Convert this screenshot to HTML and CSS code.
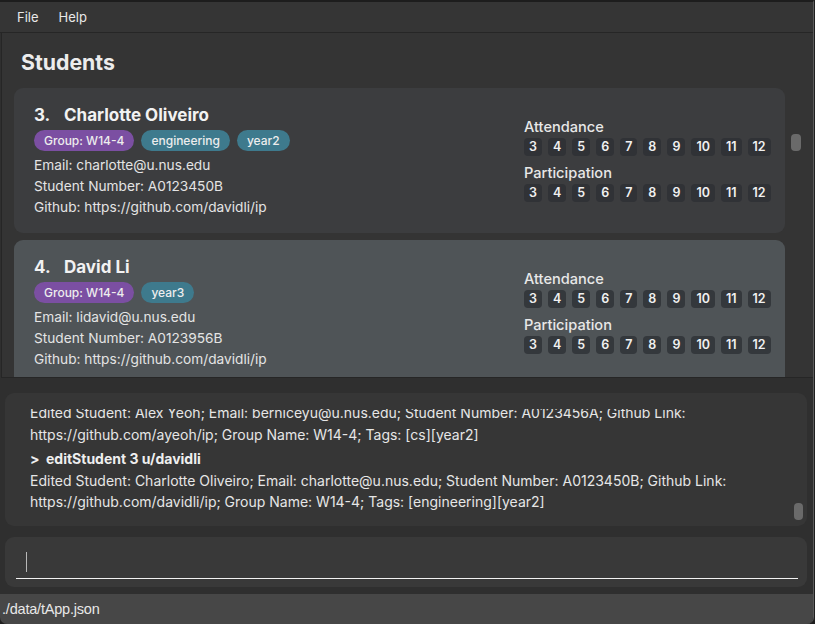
FILE: index.html
```html
<!DOCTYPE html>
<html>
<head>
<meta charset="utf-8">
<link rel="stylesheet" href="styles.css">
</head>
<body>
<div class="window">
  <div class="menubar"><span class="menu-item">File</span><span class="menu-item">Help</span></div>
  <div class="list-panel">
    <h1 class="title">Students</h1>
    <div class="list-wrap">
      <div class="list">
        <div class="card">
          <div class="info">
            <div class="name"><span class="idx">3.</span>Charlotte Oliveiro</div>
            <div class="tags"><span class="tag group">Group: W14-4</span><span class="tag">engineering</span><span class="tag">year2</span></div>
            <div class="field">Email: charlotte@u.nus.edu</div>
            <div class="field">Student Number: A0123450B</div>
            <div class="field">Github: https://github.com/davidli/ip</div>
          </div>
          <div class="marks">
            <div class="marks-label">Attendance</div>
            <div class="weeks"><span class="wk">3</span><span class="wk">4</span><span class="wk">5</span><span class="wk">6</span><span class="wk">7</span><span class="wk">8</span><span class="wk">9</span><span class="wk">10</span><span class="wk">11</span><span class="wk">12</span></div>
            <div class="marks-label second">Participation</div>
            <div class="weeks"><span class="wk">3</span><span class="wk">4</span><span class="wk">5</span><span class="wk">6</span><span class="wk">7</span><span class="wk">8</span><span class="wk">9</span><span class="wk">10</span><span class="wk">11</span><span class="wk">12</span></div>
          </div>
        </div>
        <div class="card selected">
          <div class="info">
            <div class="name"><span class="idx">4.</span>David Li</div>
            <div class="tags"><span class="tag group">Group: W14-4</span><span class="tag">year3</span></div>
            <div class="field">Email: lidavid@u.nus.edu</div>
            <div class="field">Student Number: A0123956B</div>
            <div class="field">Github: https://github.com/davidli/ip</div>
          </div>
          <div class="marks">
            <div class="marks-label">Attendance</div>
            <div class="weeks"><span class="wk">3</span><span class="wk">4</span><span class="wk">5</span><span class="wk">6</span><span class="wk">7</span><span class="wk">8</span><span class="wk">9</span><span class="wk">10</span><span class="wk">11</span><span class="wk">12</span></div>
            <div class="marks-label second">Participation</div>
            <div class="weeks"><span class="wk">3</span><span class="wk">4</span><span class="wk">5</span><span class="wk">6</span><span class="wk">7</span><span class="wk">8</span><span class="wk">9</span><span class="wk">10</span><span class="wk">11</span><span class="wk">12</span></div>
          </div>
        </div>
      </div>
      <div class="track"><div class="thumb list-thumb"></div></div>
    </div>
  </div>
  <div class="lower">
    <div class="result">
      <div class="result-view">
        <div class="result-text">
          <div class="out">Edited Student: Alex Yeoh; Email: berniceyu@u.nus.edu; Student Number: A0123456A; Github Link: https://github.com/ayeoh/ip; Group Name: W14-4; Tags: [cs][year2]</div>
          <div class="cmd"><span class="prompt">&gt;</span>editStudent 3 u/davidli</div>
          <div class="out">Edited Student: Charlotte Oliveiro; Email: charlotte@u.nus.edu; Student Number: A0123450B; Github Link: https://github.com/davidli/ip; Group Name: W14-4; Tags: [engineering][year2]</div>
        </div>
      </div>
      <div class="result-track"><div class="thumb"></div></div>
    </div>
    <div class="command">
      <div class="input"><span class="caret"></span></div>
    </div>
  </div>
  <div class="status">./data/tApp.json</div>
</div>
</body>
</html>
```

FILE: styles.css
```css
* { box-sizing: border-box; }
html, body { margin: 0; padding: 0; }
body {
  background: #1f1f1f;
  font-family: Inter, "Noto Sans", sans-serif;
  color: #e6e6e6;
  width: 815px;
  height: 624px;
  overflow: hidden;
}
.window {
  width: 814px;
  height: 624px;
  border-top: 2px solid #1d1d1d;
  border-right: 1px solid #5a5a5a;
  border-bottom-right-radius: 7px;
  border-bottom-left-radius: 7px;
  display: flex;
  flex-direction: column;
  overflow: hidden;
  background: #2f2f2f;
}
.menubar {
  height: 31px;
  background: #353535;
  border-bottom: 1px solid #262626;
  display: flex;
  align-items: center;
  padding-left: 17px;
  gap: 20px;
  font-size: 13px;
  color: #e8e8e8;
}
.list-panel {
  height: 345px;
  background: #343434;
  border-left: 1px solid #262626;
  margin-left: 1px;
  border-bottom: 1px solid #262626;
  display: flex;
  flex-direction: column;
}
.title {
  margin: 17px 0 14px 19px;
  font-size: 21.3px;
  line-height: 24px;
  font-weight: 700;
  color: #ececec;
}
.list-wrap {
  flex: 1;
  display: flex;
  overflow: hidden;
  padding-left: 12px;
}
.list {
  width: 771px;
  display: flex;
  flex-direction: column;
  gap: 7px;
}
.card {
  flex: none;
  height: 145px;
  background: #3c3d3f;
  border-radius: 9px;
  padding: 16px 16px 0 20px;
  display: flex;
  justify-content: space-between;
  align-items: flex-start;
}
.card.selected { background: #4f5457; }
.name {
  font-size: 17px;
  line-height: 22px;
  font-weight: 700;
  color: #f2f2f2;
}
.idx { display: inline-block; width: 30px; }
.tags {
  display: flex;
  gap: 7px;
  margin: 4px 0 4px;
}
.tag {
  height: 21px;
  line-height: 21px;
  padding: 0 10px;
  border-radius: 11px;
  background: #3e7a8d;
  font-size: 12px;
  font-weight: 500;
  color: #ededed;
}
.tag.group { background: #7b4fa2; }
.field {
  font-size: 13.7px;
  line-height: 21px;
  color: #e4e4e4;
}
.marks {
  width: 245px;
  margin-top: 15px;
}
.marks-label {
  font-size: 14.6px;
  line-height: 17px;
  font-weight: 500;
  color: #e8e8e8;
}
.marks-label.second { margin-top: 9px; }
.weeks {
  display: flex;
  gap: 6px;
  margin-top: 2px;
}
.wk {
  height: 18px;
  line-height: 18px;
  padding: 0 5px;
  border-radius: 4px;
  background: #303236;
  font-size: 12.5px;
  font-weight: 600;
  color: #f0f0f0;
}
.selected .wk { background: #34383c; }
.track {
  width: 10px;
  margin-left: 6px;
  padding-top: 46px;
}
.thumb {
  width: 10px;
  height: 17px;
  border-radius: 4px;
  background: #6a6a6a;
}
.lower {
  flex: 1;
  display: flex;
  flex-direction: column;
  padding: 15px 6px 6px 5px;
  gap: 11px;
}
.result {
  height: 133px;
  background: #363636;
  border-radius: 9px;
  display: flex;
  padding: 16px 4px 6px 25px;
}
.result-view {
  flex: 1;
  overflow: hidden;
}
.result-text {
  margin-top: -7px;
  font-size: 14px;
  line-height: 21.5px;
  color: #e6e6e6;
  padding-right: 40px;
}
.cmd {
  margin-top: 3px;
  font-weight: 700;
  color: #efefef;
}
.prompt { display: inline-block; width: 16px; }
.result-track {
  width: 9px;
  margin-left: 1px;
  display: flex;
  align-items: flex-end;
}
.result-track .thumb { width: 9px; }
.command {
  height: 50px;
  background: #393939;
  border-radius: 9px;
  padding: 15px 9px 0 11px;
}
.input {
  height: 27px;
  border-bottom: 1.5px solid #f2f2f2;
  padding-left: 10px;
}
.caret {
  display: block;
  width: 1px;
  height: 20px;
  background: #b8b8b8;
}
.status {
  height: 30px;
  background: #474747;
  padding-left: 2px;
  display: flex;
  align-items: center;
  font-family: "Liberation Sans", Arial, sans-serif;
  font-size: 14.5px;
  color: #e8e8e8;
  letter-spacing: -0.2px;
}
```
